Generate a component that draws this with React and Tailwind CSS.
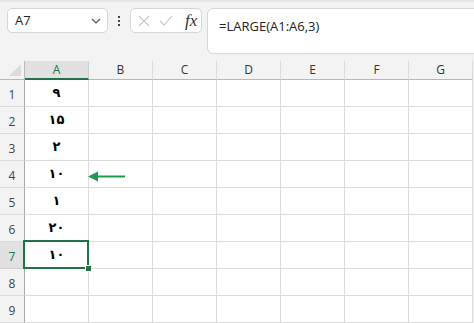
import React from 'react'

const cols = ['A', 'B', 'C', 'D', 'E', 'F', 'G']
const values = ['۹', '۱۵', '۲', '۱۰', '۱', '۲۰', '۱۰', '', '']

function App() {
  return (
    <div className="w-[474px] h-[323px] overflow-hidden bg-[#f3f3f3] relative" style={{ fontFamily: '"Open Sans", "Noto Sans", sans-serif' }}>
      {/* toolbar */}
      <div className="h-[61px] border-t-2 border-[#e6e6e6] flex items-start pt-[6px] pl-[7px]">
        <div className="w-[101px] h-[25px] shrink-0 bg-white border border-[#d6d6d6] rounded-[5px] flex items-center justify-between pl-[7px] pr-[6px]">
          <span className="text-[13px] text-[#222]">A7</span>
          <svg className="w-[10px] h-[10px]" viewBox="0 0 10 10" fill="none" stroke="#555" strokeWidth="1.2">
            <path d="M1 3l4 4 4-4" />
          </svg>
        </div>
        <div className="w-[22px] h-[25px] shrink-0 flex flex-col items-center justify-center gap-[2px]">
          <span className="w-[2px] h-[2px] bg-[#444]" />
          <span className="w-[2px] h-[2px] bg-[#444]" />
          <span className="w-[2px] h-[2px] bg-[#444]" />
        </div>
        <div className="w-[72px] h-[25px] shrink-0 bg-white border border-[#d6d6d6] rounded-[5px] flex items-center pl-[7px] gap-[9px]">
          <svg className="w-[12px] h-[12px]" viewBox="0 0 12 12" fill="none" stroke="#c4c4c4" strokeWidth="1.1">
            <path d="M1 1l10 10M11 1L1 11" />
          </svg>
          <svg className="w-[14px] h-[12px]" viewBox="0 0 14 12" fill="none" stroke="#c4c4c4" strokeWidth="1.1">
            <path d="M1 6l4 4 8-9" />
          </svg>
          <span className="text-[17px] italic text-[#333] leading-none ml-[3px]" style={{ fontFamily: '"Liberation Serif", serif' }}>fx</span>
        </div>
        <div className="ml-[5px] w-[300px] h-[46px] shrink-0 bg-white border border-[#d6d6d6] rounded-[6px] pl-[11px] pt-[4px]">
          <span className="text-[13px] text-[#222]">=LARGE(A1:A6,3)</span>
        </div>
      </div>

      {/* grid */}
      <div className="grid grid-cols-[25px_64px_64px_64px_64px_64px_64px_64px] grid-rows-[19px_27px_27px_27px_27px_27px_27px_27px_27px_27px]">
        <div className="border-r border-b border-[#b8b8b8] relative">
          <div className="absolute right-[3px] bottom-[3px] w-0 h-0 border-l-[12px] border-l-transparent border-b-[12px] border-b-[#dcdcdc]" />
        </div>
        {cols.map((c) => (
          <div
            key={c}
            className={
              c === 'A'
                ? 'bg-[#e1e1e1] border-r border-[#d0d0d0] border-b-2 border-b-[#217346] flex items-center justify-center text-[12px] text-[#217346]'
                : 'border-r border-[#dcdcdc] border-b border-b-[#b8b8b8] flex items-center justify-center text-[12px] text-[#333]'
            }
          >
            {c}
          </div>
        ))}
        {values.map((v, i) => (
          <React.Fragment key={i}>
            <div
              className={
                i === 6
                  ? 'bg-[#e1e1e1] border-r border-r-[#a8a8a8] border-b border-b-[#d4d4d4] flex items-end justify-center pb-[2px] text-[12px] text-[#217346]'
                  : 'border-r border-r-[#a8a8a8] border-b border-b-[#dcdcdc] flex items-end justify-center pb-[2px] text-[12px] text-[#444]'
              }
            >
              {i + 1}
            </div>
            <div className="border-r border-b border-[#dcdcdc] bg-white flex items-center justify-center relative">
              <span className="text-[13px] font-bold text-black" style={{ fontFamily: '"DejaVu Sans", sans-serif' }}>{v}</span>
              {i === 6 && (
                <>
                  <div className="absolute left-[-2px] top-[-2px] right-[-1px] bottom-[-1px] border-2 border-[#217346]" />
                  <div className="absolute right-[-4px] bottom-[-4px] w-[7px] h-[7px] bg-[#217346] border border-white z-10" />
                </>
              )}
            </div>
            {cols.slice(1).map((c) => (
              <div key={c} className="border-r border-b border-[#dcdcdc] bg-white" />
            ))}
          </React.Fragment>
        ))}
      </div>

      {/* arrow */}
      <svg className="absolute left-[88px] top-[171px] w-[40px] h-[11px]" viewBox="0 0 40 11">
        <path d="M9 5.5H37" stroke="#1e9a4a" strokeWidth="2" />
        <path d="M0 5.5L10 0.5V10.5Z" fill="#1e9a4a" />
      </svg>
    </div>
  )
}

export default App
